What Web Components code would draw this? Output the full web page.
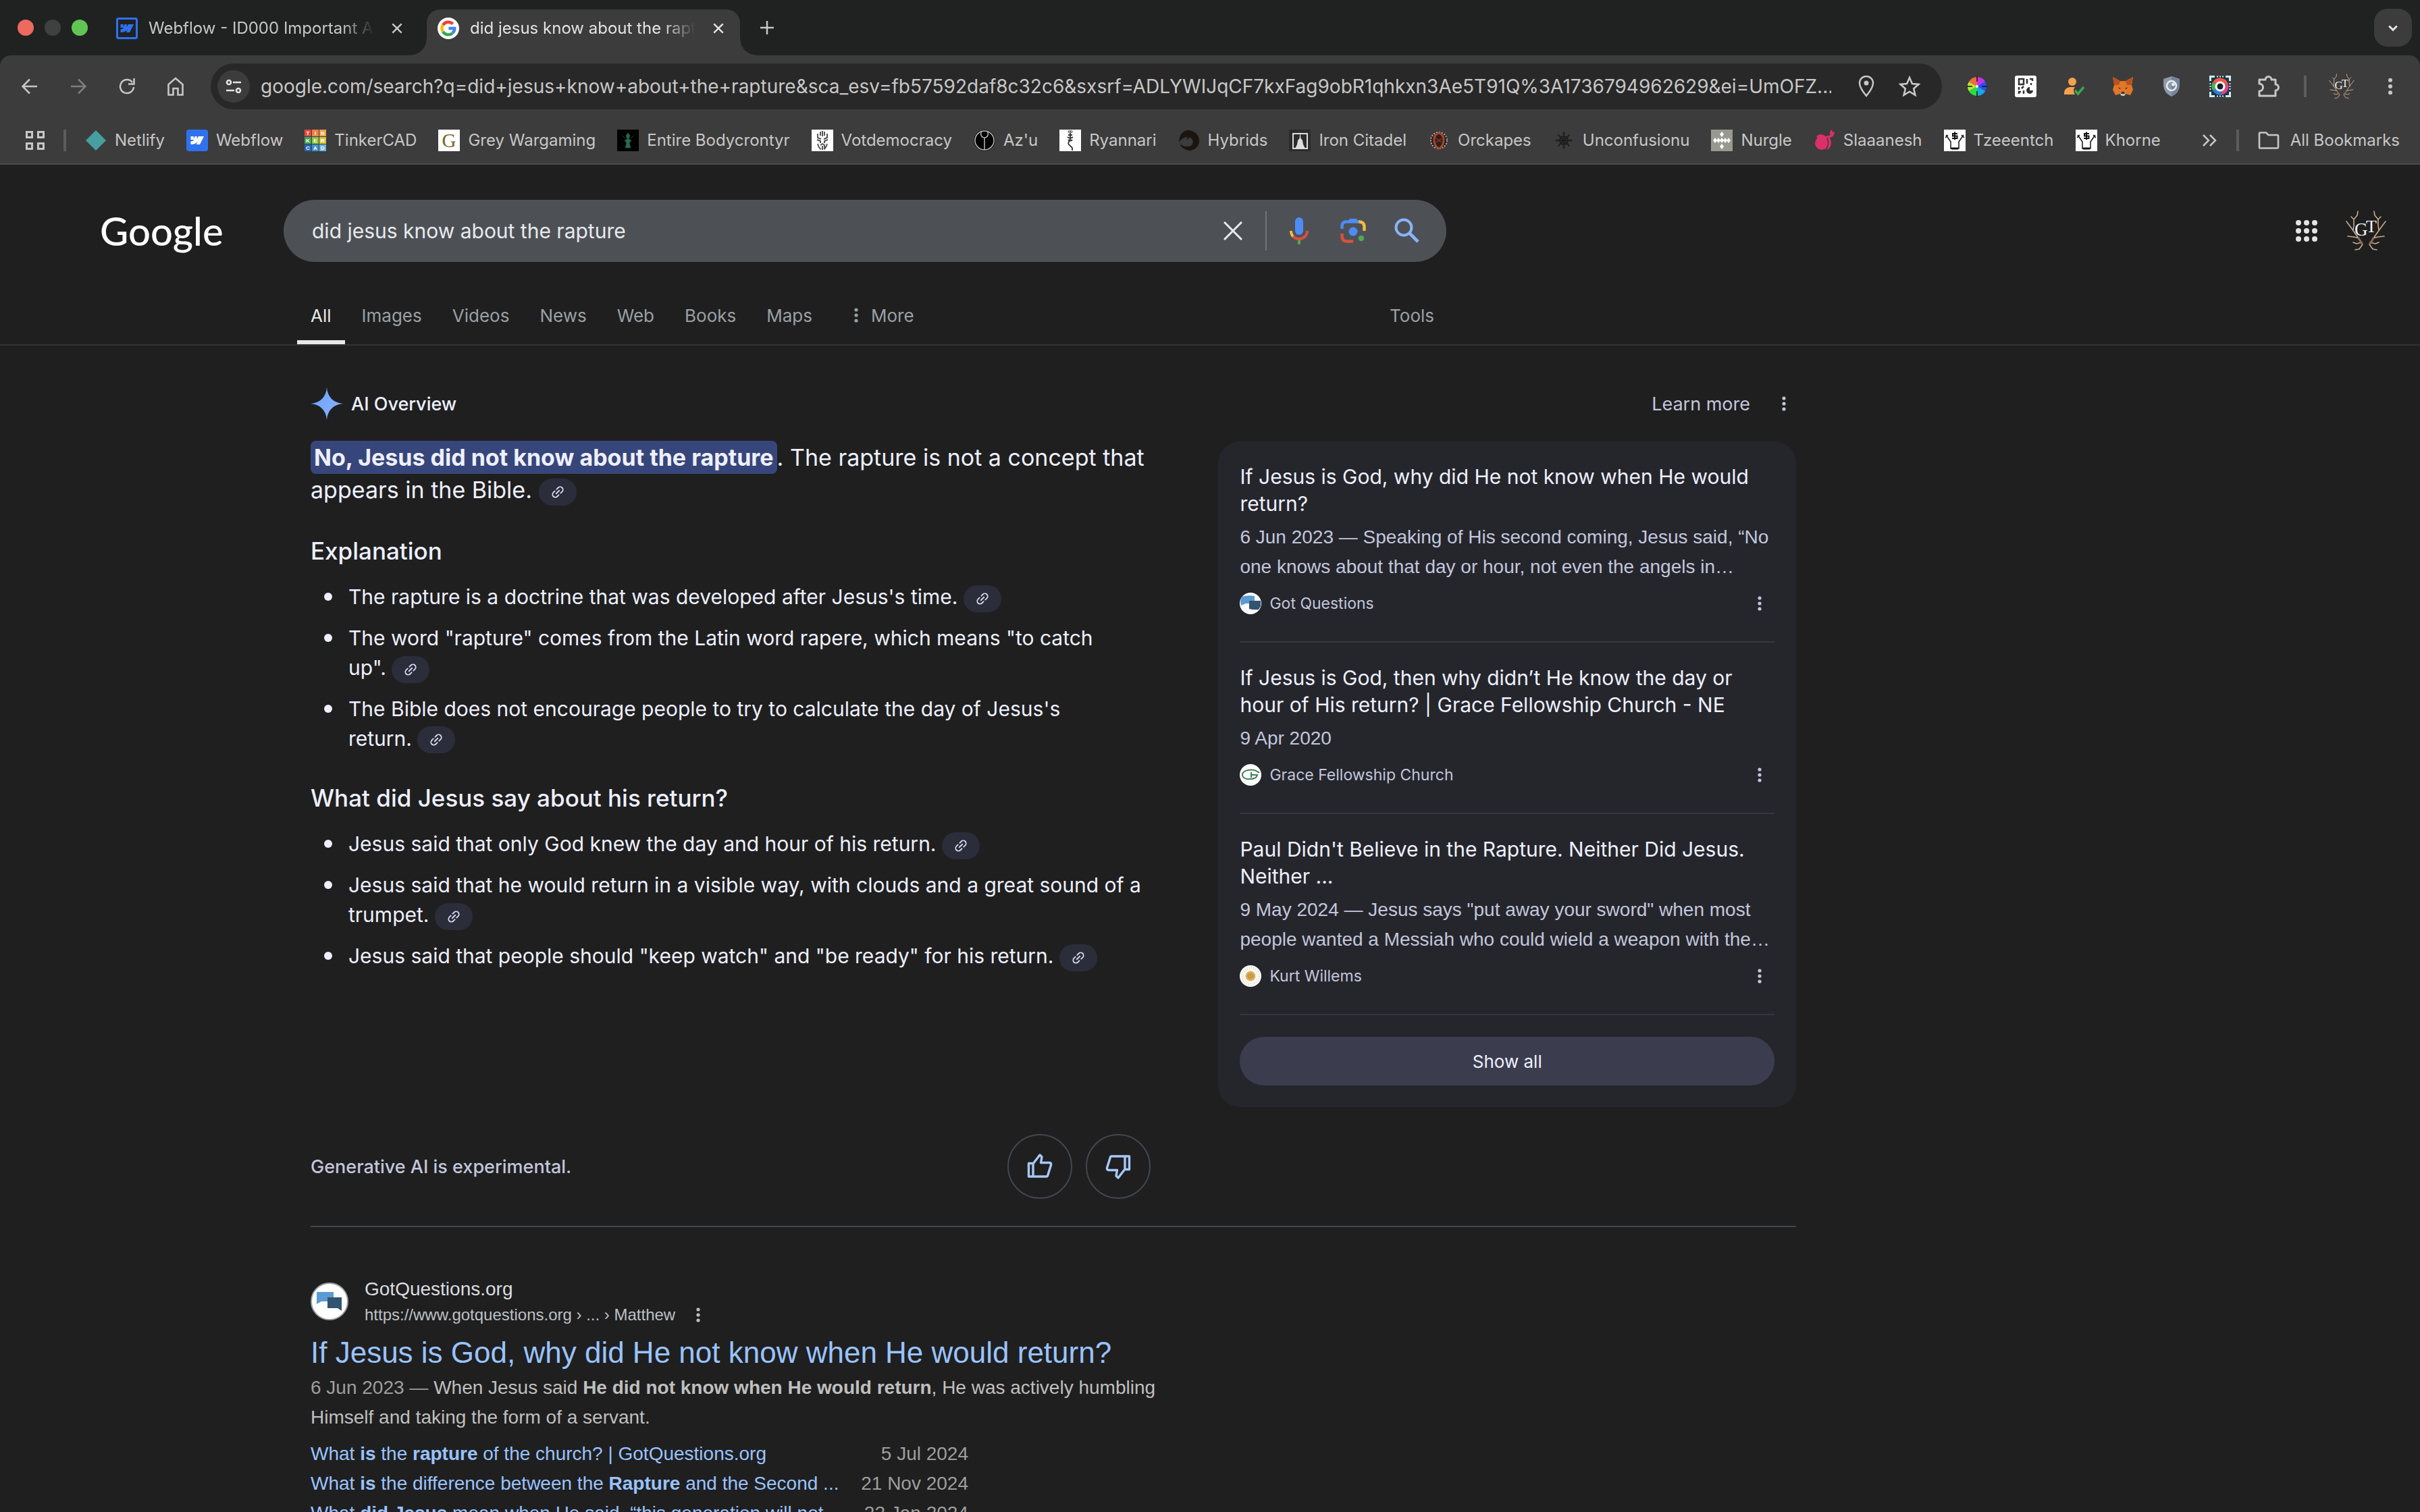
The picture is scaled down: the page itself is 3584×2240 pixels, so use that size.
<!DOCTYPE html>
<html lang="en">
<head>
<meta charset="utf-8">
<title>did jesus know about the rapture - Google Search</title>
<style>
  html {
    background: #1f1f1f;
    color-scheme: dark;
  }

  body {
    margin: 0;
    min-height: 100vh;
    overflow: hidden;
    --ui: Inter, "Liberation Sans", sans-serif;
    --arial: "Liberation Sans", Arial, sans-serif;
    font-family: var(--ui);
    color: #eef0ff;
  }
</style>
</head>
<body>

<browser-window>
  <tab-strip slot="tabs">
    <browser-tab icon="webflow-line">Webflow - ID000 Important Assets</browser-tab>
    <browser-tab icon="google" active>did jesus know about the rapture - Google</browser-tab>
  </tab-strip>
  <address-bar slot="toolbar"></address-bar>
  <bookmark-bar slot="bookmarks">
    <bookmark-link icon="netlify">Netlify</bookmark-link>
    <bookmark-link icon="webflow">Webflow</bookmark-link>
    <bookmark-link icon="tinkercad">TinkerCAD</bookmark-link>
    <bookmark-link icon="grey">Grey Wargaming</bookmark-link>
    <bookmark-link icon="entire">Entire Bodycrontyr</bookmark-link>
    <bookmark-link icon="vote">Votdemocracy</bookmark-link>
    <bookmark-link icon="azu">Az'u</bookmark-link>
    <bookmark-link icon="ryannari">Ryannari</bookmark-link>
    <bookmark-link icon="hybrids">Hybrids</bookmark-link>
    <bookmark-link icon="citadel">Iron Citadel</bookmark-link>
    <bookmark-link icon="orckapes">Orckapes</bookmark-link>
    <bookmark-link icon="chaos">Unconfusionu</bookmark-link>
    <bookmark-link icon="nurgle">Nurgle</bookmark-link>
    <bookmark-link icon="slaanesh">Slaaanesh</bookmark-link>
    <bookmark-link icon="tzeentch">Tzeeentch</bookmark-link>
    <bookmark-link icon="tzeentch">Khorne</bookmark-link>
  </bookmark-bar>

  <search-header></search-header>
  <search-nav></search-nav>

  <results-column>
    <ai-overview>
      <overview-text slot="text"></overview-text>
      <source-card slot="sources">
        <source-item icon="gotq" source="Got Questions">
          <span slot="title">If Jesus is God, why did He not know when He would return?</span>
          6 Jun 2023 — Speaking of His second coming, Jesus said, “No one knows about that day or hour, not even the angels in…
        </source-item>
        <source-item icon="grace" source="Grace Fellowship Church">
          <span slot="title">If Jesus is God, then why didn’t He know the day or hour of His return? | Grace Fellowship Church - NE</span>
          9 Apr 2020
        </source-item>
        <source-item icon="kurt" source="Kurt Willems">
          <span slot="title">Paul Didn't Believe in the Rapture. Neither Did Jesus. Neither ...</span>
          9 May 2024 — Jesus says "put away your sword" when most people wanted a Messiah who could wield a weapon with the…
        </source-item>
      </source-card>
    </ai-overview>

    <search-result>
      <span slot="title">If Jesus is God, why did He not know when He would return?</span>
      <span slot="date">6 Jun 2023 — </span>
      When Jesus said <b>He did not know when He would return</b>, He was actively humbling Himself and taking the form of a servant.
      <site-link slot="links" date="5 Jul 2024">What <b>is</b> the <b>rapture</b> of the church? | GotQuestions.org</site-link>
      <site-link slot="links" date="21 Nov 2024">What <b>is</b> the difference between the <b>Rapture</b> and the Second ...</site-link>
      <site-link slot="links" date="22 Jan 2024">What <b>did Jesus</b> mean when He said, “this generation will not ...</site-link>
    </search-result>
  </results-column>
</browser-window>

<script>
  const antlers = `
    <g fill="none" stroke="#c9ab8d" stroke-width="1.6" stroke-linecap="round" stroke-linejoin="round">
      <path d="M27 52 L19 40 L9 26 L3 18 M13 31 L14 24 L14 15 L19 9 L20 3 M14 15 L10 11 M22 43 L14 41 L5 40 M26 49 L18 51 L13 49 M27 52 L22 59 L16 60"/>
      <path d="M37 52 L45 40 L55 26 L61 18 M51 31 L50 24 L50 15 L45 9 L44 3 M50 15 L54 11 M42 43 L50 41 L59 40 M38 49 L46 51 L51 49 M37 52 L42 59 L48 60"/>
    </g>
    <g fill="none" stroke="#8a6a52" stroke-width="3" stroke-linecap="round"><path d="M26 51 L21 43 M38 51 L43 43"/></g>
    <text x="15" y="39" font-family="Liberation Serif" font-size="27" fill="#f4f4f4">G</text>
    <text x="32" y="34" font-family="Liberation Serif" font-size="26" fill="#f4f4f4">T</text>`;

  const robed = `
    <rect width="32" height="32" fill="#fff"/>
    <path d="M3 8 L10 18 V28 H22 V18 L29 8 M2 12 L6 8 M30 12 L26 8" fill="none" stroke="#111" stroke-width="1.500"/>
    <path d="M11 28 h10" stroke="#111" stroke-width="3"/>
    <path d="M20 6 H13 V9.500 H19.500 V13 H12 M16 3.500 V15" fill="none" stroke="#111" stroke-width="2"/>`;

  const stroke = (body, width = 2) => `<g fill="none" stroke="currentColor" stroke-width="${width}">${body}</g>`;

  // name: [viewBox size, markup]
  const icons = {
    'google': [32, `<circle cx="16" cy="16" r="16" fill="#fff"/>
      <g fill="none" stroke-width="4.4">
        <path d="M22.7 9.6 A9.4 9.4 0 0 0 8 11" stroke="#ea4335"/>
        <path d="M8 11 A9.4 9.4 0 0 0 8 21" stroke="#fbbc05"/>
        <path d="M8 21 A9.4 9.4 0 0 0 22 23.2" stroke="#34a853"/>
        <path d="M22 23.2 A9.4 9.4 0 0 0 25.3 16 H16.4" stroke="#4285f4"/>
      </g>`],
    'webflow-line': [32, `<rect x="1.5" y="1.5" width="29" height="29" rx="2" fill="none" stroke="#2f72f0" stroke-width="3"/>
      <path d="M26 10 L20 22 h-5.4 l2.3-4.6 Q13 22 6.500 22 V17.600 Q10 17.300 11.500 15 H6.500 V10 h4.300 v4 l1.700-4 h3.300 v4 l2-4 z" fill="#2f72f0"/>`],
    'webflow': [32, `<rect width="32" height="32" rx="4" fill="#2f72f0"/>
      <path d="M26 10 L20 22 h-5.4 l2.3-4.6 Q13 22 6.500 22 V17.600 Q10 17.300 11.500 15 H6.500 V10 h4.300 v4 l1.700-4 h3.300 v4 l2-4 z" fill="#fff"/>`],
    'close': [24, stroke('<path d="M4 4 L20 20 M20 4 L4 20"/>', 3)],
    'close-thin': [28, stroke('<path d="M1 1 L27 27 M27 1 L1 27"/>', 3)],
    'plus': [24, stroke('<path d="M12 2 V22 M2 12 H22"/>', 2.500)],
    'chevron': [24, stroke('<path d="M5 9 L12 16 L19 9"/>', 3.500)],
    'back': [24, stroke('<path d="M23 12 H2 M12 1.500 L1.500 12 L12 22.500"/>', 2.500)],
    'forward': [24, stroke('<path d="M1 12 H22 M12 1.500 L22.500 12 L12 22.500"/>', 2.500)],
    'reload': [24, stroke('<path d="M20 6 A10 10 0 1 0 22 13 M22.500 0 V8.500 H14"/>', 2.500)],
    'home': [28, stroke('<path d="M3.500 26.500 V11 L14 2 L24.500 11 V26.500 H17.500 V17 H10.500 V26.500 Z"/>', 2.600)],
    'tune': [24, stroke('<circle cx="5" cy="6" r="3"/><path d="M11 6 H23 M1 18 H13"/><circle cx="19" cy="18" r="3"/>', 2.600)],
    'pin': [32, stroke('<path d="M16 30 Q6 18 6 11 A10 10 0 0 1 26 11 Q26 18 16 30 Z"/>', 2.500) + '<circle cx="16" cy="11" r="3.500" fill="currentColor"/>'],
    'star': [32, stroke('<path d="M16 3 L19.900 12 L29.500 12.900 L22.200 19.300 L24.400 28.800 L16 23.700 L7.600 28.800 L9.800 19.300 L2.500 12.900 L12.100 12 Z"/>', 2.600)],
    'wheel': [32, `<g stroke="none">
        <path d="M16 16 V2 A14 14 0 0 1 28.100 9 Z" fill="#c435f0"/><path d="M16 16 L28.100 9 A14 14 0 0 1 28.100 23 Z" fill="#2b50f5"/>
        <path d="M16 16 L28.100 23 A14 14 0 0 1 16 30 Z" fill="#14a9e8"/><path d="M16 16 V30 A14 14 0 0 1 3.900 23 Z" fill="#2cdb3c"/>
        <path d="M16 16 L3.900 23 A14 14 0 0 1 3.900 9 Z" fill="#b5e836"/><path d="M16 16 L3.900 9 A14 14 0 0 1 16 2 Z" fill="#f5683b"/>
      </g><path d="M16 1 V9 M16 23 V31 M1 16 H9 M23 16 H31" stroke="#111" stroke-width="1.500"/><circle cx="16" cy="16" r="2" fill="#fff"/>`],
    'qr': [32, `<rect width="32" height="32" rx="3" fill="#fff"/><g fill="none" stroke="#333" stroke-width="2.500"><rect x="6" y="5" width="7" height="8"/><path d="M18 5 V12 M22 5 H26 V8 M24 11 V14 M6 17 V21 M10 19 L13 16 M6 27 V24 H9 M13 22 V27"/></g><path d="M22 17 V22 H27 A5 5 0 1 1 22 17 Z" fill="#333"/>`],
    'person': [32, `<circle cx="13" cy="9" r="6" fill="#f6a04d"/><path d="M1 28 V25 Q2 18 9 17 H17 Q13 22 17 28 Z" fill="#f6a04d"/><path d="M17 22 L21.500 27 L30 17" fill="none" stroke="#39a852" stroke-width="3.500"/>`],
    'fox': [32, `<path d="M1 2 L12 8 H20 L31 2 L29 14 L31 21 L27 29 L20 27 L18 30 H14 L12 27 L5 29 L1 21 L3 14 Z" fill="#e17726"/>
      <path d="M1 2 L12 8 L10 14 L3 14 Z M31 2 L20 8 L22 14 L29 14 Z" fill="#b8531d"/><path d="M12 27 L14 24 H18 L20 27 L18 30 H14 Z" fill="#d5bfb2"/><path d="M14 24 h4 l1 3 h-6 z M9 17 l4 2 -2 1 z M23 17 l-4 2 2 1 z" fill="#233447"/>`],
    'shield': [32, `<path d="M16 1 L28 5 V15 Q27 26 16 31 Q5 26 4 15 V5 Z" fill="#8d99ab"/><path d="M16 1 L28 5 V15 Q27 26 16 31 Z" fill="#76839a"/><circle cx="16" cy="15" r="7" fill="none" stroke="#e9edf2" stroke-width="2.500"/><circle cx="18.500" cy="13" r="2.500" fill="#e9edf2"/>`],
    'lenscap': [32, `<rect x="1.500" y="1.500" width="29" height="29" fill="#20343f"/><path d="M1.500 8 V1.500 H8 M24 1.500 H30.500 V8 M30.500 24 V30.500 H24 M8 30.500 H1.500 V24" fill="none" stroke="#c9f0fb" stroke-width="3"/><path d="M11 1.500 H22 M11 30.500 H22 M1.500 11 V22 M30.500 11 V22" stroke="#c9f0fb" stroke-width="2" stroke-dasharray="2 2"/><path d="M16 16 L5 10 A12.500 12.500 0 0 1 28 13 Z" fill="#f0584b"/><path d="M16 16 L28 13 A12.500 12.500 0 0 1 18 28.500 Z" fill="#d8488a"/><path d="M16 16 L18 28.500 A12.500 12.500 0 0 1 5 22 Z" fill="#2f7fd8"/><path d="M16 16 L5 22 A12.500 12.500 0 0 1 5 10 Z" fill="#4cb14f"/><circle cx="16" cy="16" r="7.500" fill="#fff"/><circle cx="16" cy="16" r="4.500" fill="#14202c"/>`],
    'puzzle': [36, stroke('<path d="M4 8 H13 A4.500 4.500 0 0 1 22 8 H28 V15 A4.500 4.500 0 0 1 28 24 V32 H4 V25 A5.500 5.500 0 0 0 4 14 Z" stroke-linejoin="round"/>', 3)],
    'antlers': [64, antlers],
    'dots': [24, '<g fill="currentColor"><circle cx="12" cy="4" r="2.600"/><circle cx="12" cy="12" r="2.600"/><circle cx="12" cy="20" r="2.600"/></g>'],
    'apps': [32, '<g fill="currentColor">' + [4, 16, 28].map(y => [4, 16, 28].map(x => `<circle cx="${x}" cy="${y}" r="4"/>`).join('')).join('') + '</g>'],
    'grid': [28, stroke('<rect x="1.500" y="1.500" width="8" height="8"/><rect x="18.500" y="1.500" width="8" height="8"/><rect x="1.500" y="18.500" width="8" height="8"/><rect x="18.500" y="18.500" width="8" height="8"/>', 3)],
    'more-right': [24, stroke('<path d="M3 4 L11 12 L3 20 M13 4 L21 12 L13 20"/>', 2.500)],
    'folder': [32, stroke('<path d="M2 26 V6 Q2 4.500 3.500 4.500 H12 L15.500 8 H28.500 Q30 8 30 9.500 V26 Q30 27.500 28.500 27.500 H3.500 Q2 27.500 2 26 Z"/>', 2.600)],

    'netlify': [32, '<path d="M16 1 L31 16 L16 31 L1 16 Z" fill="#479f9f"/>'],
    'tinkercad': [32, ['#e5493a', '#f0824a', '#f0a04a', '#44a859', '#8fc63f', '#dcc63f', '#2468b2', '#3f8fcc', '#6fb3dc'].map((c, i) => {
        const x = (i % 3) * 11, y = Math.floor(i / 3) * 11;
        return `<rect x="${x}" y="${y}" width="10" height="10" fill="${c}"/><text x="${x + 5}" y="${y + 8}" text-anchor="middle" font-family="Liberation Sans" font-weight="700" font-size="8" fill="#fff">${'TINKERCAD'[i]}</text>`;
      }).join('')],
    'grey': [32, '<rect width="32" height="32" fill="#fff"/><text x="16" y="26" text-anchor="middle" font-family="Liberation Serif" font-size="29" fill="#7b6226">G</text>'],
    'entire': [32, '<rect width="32" height="32" fill="#000"/><path d="M16 5 L19 9 L17 14 L21 16 L18 20 L20 27 H12 L14 20 L11 16 L15 14 L13 9 Z M8 9 L12 13 M24 9 L20 13" fill="#2a6b50" stroke="#1d4c3a"/>'],
    'vote': [32, '<rect width="32" height="32" fill="#fff"/><g fill="none" stroke="#555" stroke-width="2"><path d="M13 3 V9 M16 2 V10 M19 3 V9 M9 6 V12 L14 14 M23 6 V12 L18 14 M8 15 L13 17 V20 M24 15 L19 17 V20 M9 21 Q11 28 14 29 M23 21 Q21 28 18 29 M13 23 L16 21 L19 23 V28 M16 24 V30"/></g>'],
    'azu': [32, '<circle cx="16" cy="16" r="15.500" fill="#000"/><circle cx="16" cy="16" r="14" fill="none" stroke="#bbb" stroke-width="1.500"/><path d="M16 12 V30 M13 2 A5.500 5.500 0 0 0 16 12 A5.500 5.500 0 0 0 19 2" fill="none" stroke="#bbb" stroke-width="1.500"/>'],
    'ryannari': [32, '<rect width="32" height="32" fill="#fff"/><circle cx="14.500" cy="3" r="1.500" fill="none" stroke="#333"/><circle cx="17.500" cy="3" r="1.500" fill="none" stroke="#333"/><path d="M16 5 V14 L14 18 Q12 21 15 23 L19 27 V31" fill="none" stroke="#333" stroke-width="1.800"/><path d="M12 11 Q16 14 20 11 M13 15 Q16 18 19 15 M13 8 H19" fill="none" stroke="#333" stroke-width="2"/>'],
    'hybrids': [32, '<path d="M15 1 Q30 3 31 17 Q29 30 16 31 Q5 28 3 22 Q14 29 21 22 Q24 15 17 11 L13 15 L14 10 L6 13 L1 18 L3 9 Q8 1 15 1 Z" fill="#1b1512" stroke="#1b1512" stroke-dasharray="2 2"/>'],
    'citadel': [32, '<rect width="32" height="32" fill="#2b2b2b"/><rect x="6" y="6" width="21" height="22" fill="none" stroke="#ddd" stroke-width="2"/><path d="M16.500 3 L17.500 13 L20 16 L21 22 L24 28 H9 L12 22 L13 16 L15.500 13 Z" fill="#ddd"/>'],
    'orckapes': [32, '<circle cx="16" cy="16" r="12" fill="#24201f" stroke="#b8b2ae" stroke-width="2" stroke-dasharray="2 2"/><path d="M16 5 Q8 8 9 17 Q10 25 16 28 Q22 25 23 17 Q24 8 16 5" fill="none" stroke="#a8452c" stroke-width="3"/><path d="M12 13 L20 19 M20 13 L12 19" stroke="#7b3020" stroke-width="2"/>'],
    'chaos': [32, '<g stroke="#1c1e20" fill="none" stroke-width="2"><circle cx="16" cy="16" r="6"/><path d="M16 4 V28 M4 16 H28 M7.500 7.500 L24.500 24.500 M24.500 7.500 L7.500 24.500"/></g><path d="M16 3 l2 3 h-4 z M16 29 l2-3 h-4 z M3 16 l3 2 v-4 z M29 16 l-3 2 v-4 z" fill="#1c1e20"/>'],
    'nurgle': [32, '<rect width="32" height="32" fill="#98998f"/><g fill="#fff">' + [[16, 7], [16, 16], [16, 25], [6, 16], [11, 16], [21, 16], [26, 16]].map(([x, y]) => `<path d="M${x} ${y - 4} l3 4 -3 4 -3 -4 z"/>`).join('') + '</g>'],
    'slaanesh': [32, '<ellipse cx="12" cy="20" rx="10" ry="10" fill="#db3069"/><path d="M4 10 Q10 4 18 10 L25 8 Q22 4 27 0 L28 4 L31 3 Q31 10 24 12 L26 18 Q26 28 19 30 Z" fill="#db3069"/><path d="M20 12 Q24 21 18 30" fill="none" stroke="#3c3c3c" stroke-width="1.500"/>'],
    'tzeentch': [32, robed],

    'mic': [40, `<rect x="14" y="0" width="12" height="26" rx="6" fill="#4f8bf5"/><path d="M18 32 h4 v8 h-4 z" fill="#53a653"/>
      <path d="M8 20 Q8 26 12 29" fill="none" stroke="#f2bb42" stroke-width="4"/><path d="M11 28 Q15 32 20 32 A12 12 0 0 0 32 20" fill="none" stroke="#d9503f" stroke-width="4"/>`],
    'lens': [40, `<g fill="none" stroke-width="4.500">
        <path d="M3.500 17 V13 Q3.500 6.500 10 6.500 H28" stroke="#4f8bf5"/><path d="M28 6.500 Q36.500 6.500 36.500 14 V20" stroke="#f2bb42"/>
        <path d="M3.500 24 V28 Q3.500 35.500 11 35.500 H20" stroke="#d9503f"/></g>
      <path d="M12 6 L15 2 H25 L29 8 H12 Z" fill="#4f8bf5"/><circle cx="20" cy="21" r="6.500" fill="#4f8bf5"/><circle cx="32" cy="31" r="4.200" fill="#53a653"/>`],
    'magnify': [40, '<g fill="none" stroke="#8ab4f8" stroke-width="4"><circle cx="15" cy="15" r="11.500"/><path d="M23 23 L36 36" stroke-width="4.800"/></g>'],
    'spark': [48, `<defs><linearGradient id="g" x1="0" y1="0" x2="1" y2="1"><stop offset="0" stop-color="#6c9ffb"/><stop offset="1" stop-color="#8ab4ff"/></linearGradient></defs>
      <path d="M24 0 C25 14 34 23 48 24 C34 25 25 34 24 48 C23 34 14 25 0 24 C14 23 23 14 24 0 Z" fill="url(#g)"/>`],
    'link': [24, '<g fill="none" stroke="currentColor" stroke-width="2" stroke-linecap="round" transform="rotate(-45 12 12)"><path d="M10 7.500 H6.500 a4.500 4.500 0 0 0 0 9 H10 M14 7.500 H17.500 a4.500 4.500 0 0 1 0 9 H14 M8.500 12 H15.500"/></g>'],
    'thumb-up': [40, stroke('<path d="M3.500 15.500 H10 V35 H3.500 Z M10 16 L20 3 L23 6 L21.500 14.500 H34.500 Q37 15 36.500 18 L31.500 34 Q31 35 30 35 H10" stroke-linejoin="round"/>', 3.400)],
    'gotq': [32, '<circle cx="16" cy="16" r="16" fill="#fff"/><path d="M3 6 Q12 3 22 5 V16 H9 L2 19 Q0 12 3 6 Z" fill="#5b9bd1"/><path d="M14 12 H31 V20 L28 25 Q20 26 14 24 Z" fill="#31546f"/>'],
    'gotq-large': [56, '<circle cx="28" cy="28" r="27" fill="#fff" stroke="#9aa0a6" stroke-width="2"/><path d="M9 14 H34 V28 H16 L9 32 Z" fill="#5b9bd1"/><path d="M25 22 H46 V42 L40 38 H25 Z" fill="#31546f"/>'],
    'grace': [32, '<circle cx="16" cy="16" r="16" fill="#fff"/><path d="M29 13 Q22 7 12 9 Q3 11 4 17 Q6 23 16 22 Q25 22 26 16 H18 M17 12 V20" fill="none" stroke="#3f7d56" stroke-width="2"/>'],
    'kurt': [32, '<circle cx="16" cy="16" r="16" fill="#fbfaf6"/><circle cx="16" cy="16" r="12" fill="none" stroke="#e6dfc8" stroke-dasharray="1 2" stroke-width="4"/><circle cx="16" cy="16" r="7.500" fill="#d9b566"/><circle cx="16" cy="16" r="5" fill="#c99d45"/>'],
  };

  class UiIcon extends HTMLElement {
    constructor() {
      super();
      this.attachShadow({ mode: 'open' });
    }

    connectedCallback() {
      const [box, body] = icons[this.getAttribute('name')];
      const size = this.getAttribute('size') || box;
      this.shadowRoot.innerHTML = `
        <style>
          :host { display: inline-flex; flex: none; }
          svg { display: block; }
        </style>
        <svg width="${size}" height="${size}" viewBox="0 0 ${box} ${box}" aria-hidden="true">${body}</svg>`;
    }
  }
  customElements.define('ui-icon', UiIcon);

  // Base for everything else: subclasses return their styles and markup from render().
  class Part extends HTMLElement {
    constructor() {
      super();
      this.attachShadow({ mode: 'open' });
    }

    connectedCallback() {
      this.shadowRoot.innerHTML = `
        <style>
          * { box-sizing: border-box; margin: 0; padding: 0; }
          button { display: inline-flex; align-items: center; justify-content: center; border: 0; background: none; color: inherit; font: inherit; cursor: pointer; }
          a { color: inherit; text-decoration: none; }
          input { border: 0; outline: 0; background: none; font: inherit; color: inherit; }
        </style>` + this.render();
    }
  }

  customElements.define('browser-window', class extends Part {
    render() {
      return `
        <style>
          :host { display: block; }
          .chrome { background: #202221; color: #c7c7c7; }
          .bars { background: #3c3c3c; border-radius: 16px 16px 0 0; border-bottom: 2px solid #4a4a4a; }
        </style>
        <div class="chrome">
          <slot name="tabs"></slot>
          <div class="bars">
            <slot name="toolbar"></slot>
            <slot name="bookmarks"></slot>
          </div>
        </div>
        <slot></slot>`;
    }
  });

  customElements.define('tab-strip', class extends Part {
    render() {
      return `
        <style>
          :host { display: flex; align-items: center; height: 82px; padding: 0 12px 0 26px; }
          .lights { display: flex; gap: 16px; margin-right: 26px; }
          .lights i { width: 24px; height: 24px; border-radius: 50%; background: #3f4140; }
          .lights i:first-child { background: #ed6a5e; }
          .lights i:last-child { background: #61c554; }
          .tabs { display: flex; gap: 12px; align-self: stretch; padding-top: 14px; }
          .new { width: 56px; height: 56px; margin-left: 12px; }
          .search { width: 56px; height: 56px; margin-left: auto; border-radius: 20px; background: #3c3c3c; color: #e3e3e3; }
        </style>
        <div class="lights"><i></i><i></i><i></i></div>
        <div class="tabs"><slot></slot></div>
        <button class="new" aria-label="New tab"><ui-icon name="plus"></ui-icon></button>
        <button class="search" aria-label="Search tabs"><ui-icon name="chevron" size="20"></ui-icon></button>`;
    }
  });

  customElements.define('browser-tab', class extends Part {
    render() {
      return `
        <style>
          :host { box-sizing: border-box; display: flex; align-items: center; gap: 16px; width: 464px; padding: 0 22px 12px 16px; font-size: 24px; line-height: 32px; position: relative; }
          :host([active]) { background: #3c3c3c; border-radius: 20px 20px 0 0; color: #e3e3e3; }
          :host([active])::before, :host([active])::after {
            content: ""; position: absolute; bottom: 0; width: 24px; height: 24px;
            background: radial-gradient(circle at 0 0, transparent 23px, #3c3c3c 24px);
          }
          :host([active])::before { right: 100%; }
          :host([active])::after { left: 100%; transform: scaleX(-1); }
          .title { flex: 1; min-width: 0; overflow: hidden; white-space: nowrap; margin-right: 8px; mask-image: linear-gradient(to left, transparent, #000 48px); }
        </style>
        <ui-icon name="${this.getAttribute('icon')}"></ui-icon>
        <span class="title"><slot></slot></span>
        <button aria-label="Close tab"><ui-icon name="close" size="20"></ui-icon></button>`;
    }
  });

  customElements.define('address-bar', class extends Part {
    render() {
      const extensions = ['wheel', 'qr', 'person', 'fox', 'shield', 'lenscap'];
      return `
        <style>
          :host { display: flex; align-items: center; height: 92px; padding: 0 8px; }
          button { width: 72px; height: 64px; }
          .off { color: #7d7d7d; }
          .box { flex: 1; display: flex; align-items: center; height: 68px; margin: 0 16px; padding: 0 16px 0 10px; border-radius: 34px; background: #282828; font-size: 28px; }
          .box button { width: 64px; }
          .box .site { width: 48px; height: 48px; border-radius: 50%; background: #3c3c3c; color: #e3e3e3; }
          input { flex: 1; min-width: 0; height: 48px; margin: 0 20px 0 16px; }
          .rule { width: 4px; height: 32px; margin: 0 16px; background: #5c5c5c; }
        </style>
        <button aria-label="Back"><ui-icon name="back"></ui-icon></button>
        <button class="off" aria-label="Forward"><ui-icon name="forward"></ui-icon></button>
        <button aria-label="Reload"><ui-icon name="reload"></ui-icon></button>
        <button aria-label="Home"><ui-icon name="home"></ui-icon></button>
        <div class="box">
          <button class="site" aria-label="View site information"><ui-icon name="tune"></ui-icon></button>
          <input aria-label="Address and search bar" value="google.com/search?q=did+jesus+know+about+the+rapture&amp;sca_esv=fb57592daf8c32c6&amp;sxsrf=ADLYWIJqCF7kxFag9obR1qhkxn3Ae5T91Q%3A1736794962629&amp;ei=UmOFZ...">
          <button aria-label="Location"><ui-icon name="pin"></ui-icon></button>
          <button aria-label="Bookmark this tab"><ui-icon name="star"></ui-icon></button>
        </div>
        ${extensions.map(name => `<button aria-label="${name}"><ui-icon name="${name}"></ui-icon></button>`).join('')}
        <button aria-label="Extensions"><ui-icon name="puzzle"></ui-icon></button>
        <span class="rule"></span>
        <button aria-label="Profile"><ui-icon name="antlers" size="40"></ui-icon></button>
        <button aria-label="Menu"><ui-icon name="dots" size="28"></ui-icon></button>`;
    }
  });

  customElements.define('bookmark-bar', class extends Part {
    render() {
      return `
        <style>
          :host { display: flex; align-items: center; height: 68px; padding: 0 30px 0 38px; font-size: 24px; line-height: 32px; white-space: nowrap; }
          .rule { width: 4px; height: 32px; margin: 0 28px; background: #5c5c5c; }
          .list { display: flex; gap: 32px; }
          .over { margin-left: auto; }
          .all { display: flex; align-items: center; gap: 16px; }
        </style>
        <button aria-label="Tab groups"><ui-icon name="grid"></ui-icon></button>
        <span class="rule"></span>
        <div class="list"><slot></slot></div>
        <button class="over" aria-label="More bookmarks"><ui-icon name="more-right"></ui-icon></button>
        <span class="rule"></span>
        <button class="all"><ui-icon name="folder"></ui-icon>All Bookmarks</button>`;
    }
  });

  customElements.define('bookmark-link', class extends Part {
    render() {
      return `
        <style>
          :host { display: block; }
          a { display: flex; align-items: center; gap: 12px; }
        </style>
        <a href="#"><ui-icon name="${this.getAttribute('icon')}"></ui-icon><slot></slot></a>`;
    }
  });

  customElements.define('search-header', class extends Part {
    render() {
      return `
        <style>
          :host { display: flex; align-items: center; padding: 52px 44px 0 148px; }
          .logo { width: 272px; font: 500 58px/92px Lato, sans-serif; color: #fff; }
          form { display: flex; align-items: center; flex: 0 1 1722px; height: 92px; padding: 0 18px 0 42px; border-radius: 46px; background: #4d5156; font-size: 30px; color: #e8eaed; }
          input { flex: 1; min-width: 0; height: 64px; }
          button { width: 80px; height: 64px; }
          .clear { width: 96px; }
          .rule { width: 2px; height: 58px; margin-right: 8px; background: #72767b; }
          .apps { margin-left: auto; margin-right: 12px; color: #e3e3e3; }
          .me { width: 72px; }
        </style>
        <a class="logo" href="#">Google</a>
        <form>
          <input aria-label="Search" value="did jesus know about the rapture">
          <button class="clear" type="reset" aria-label="Clear"><ui-icon name="close-thin"></ui-icon></button>
          <span class="rule"></span>
          <button type="button" aria-label="Search by voice"><ui-icon name="mic"></ui-icon></button>
          <button type="button" aria-label="Search by image"><ui-icon name="lens"></ui-icon></button>
          <button aria-label="Search"><ui-icon name="magnify"></ui-icon></button>
        </form>
        <button class="apps" aria-label="Google apps"><ui-icon name="apps"></ui-icon></button>
        <button class="me" aria-label="Account"><ui-icon name="antlers"></ui-icon></button>`;
    }
  });

  customElements.define('search-nav', class extends Part {
    render() {
      const tabs = ['All', 'Images', 'Videos', 'News', 'Web', 'Books', 'Maps'];
      return `
        <style>
          :host { display: block; margin-top: 36px; padding-left: 440px; border-bottom: 2px solid #333; font-size: 26px; color: #9aa0a6; }
          nav { display: flex; gap: 5px; max-width: 1704px; }
          a, button { display: flex; align-items: center; height: 86px; padding: 0 20px; border-bottom: 6px solid transparent; border-top: 6px solid transparent; }
          .on { color: #e8e8e8; border-bottom-color: #e8e8e8; }
          .more { gap: 10px; padding-left: 28px; }
          .tools { margin-left: auto; }
        </style>
        <nav>
          ${tabs.map((t, i) => `<a href="#" class="${i ? '' : 'on'}">${t}</a>`).join('')}
          <button class="more"><ui-icon name="dots"></ui-icon>More</button>
          <button class="tools">Tools</button>
        </nav>`;
    }
  });

  customElements.define('results-column', class extends Part {
    render() {
      return `
        <style>
          :host { display: block; max-width: 2200px; margin-left: 460px; padding-top: 62px; }
        </style>
        <slot></slot>`;
    }
  });

  customElements.define('link-chip', class extends Part {
    render() {
      return `
        <style>
          :host { display: inline-flex; height: 40px; vertical-align: middle; }
          button { width: 56px; height: 40px; border-radius: 20px; background: #2c2d3b; color: #d8daf0; }
        </style>
        <button aria-label="View related links"><ui-icon name="link" size="22"></ui-icon></button>`;
    }
  });

  customElements.define('ai-overview', class extends Part {
    render() {
      return `
        <style>
          :host { display: block; border-bottom: 2px solid #43464f; padding-bottom: 40px; }
          header { display: flex; align-items: center; height: 48px; margin-bottom: 32px; }
          h2 { margin-left: 12px; font-size: 27px; font-weight: 500; }
          .learn { margin-left: auto; margin-right: 38px; font-size: 27px; color: #c3c6dc; }
          .menu { width: 24px; margin-right: 6px; color: #c3c6dc; }
          .body { display: grid; grid-template-columns: 16fr 11fr; column-gap: 100px; row-gap: 40px; }
          .feedback { display: flex; align-items: center; gap: 20px; font-size: 27px; font-weight: 500; color: #c3c6dc; }
          .feedback p { flex: 1; }
          .feedback button { width: 96px; height: 96px; border: 2px solid #444653; border-radius: 50%; color: #a8c7fa; }
          .down ui-icon { transform: rotate(180deg); }
        </style>
        <header>
          <ui-icon name="spark"></ui-icon>
          <h2>AI Overview</h2>
          <a class="learn" href="#">Learn more</a>
          <button class="menu" aria-label="About this result"><ui-icon name="dots"></ui-icon></button>
        </header>
        <div class="body">
          <slot name="text"></slot>
          <slot name="sources"></slot>
          <div class="feedback">
            <p>Generative AI is experimental.</p>
            <button aria-label="Good response"><ui-icon name="thumb-up"></ui-icon></button>
            <button class="down" aria-label="Bad response"><ui-icon name="thumb-up"></ui-icon></button>
          </div>
        </div>`;
    }
  });

  // .end keeps the last word of a sentence on the same line as its chip
  customElements.define('overview-text', class extends Part {
    render() {
      return `
        <style>
          :host { display: block; font-size: 30px; line-height: 44px; }
          .lead { font-size: 34px; line-height: 48px; }
          mark { padding: 4px 5px; border-radius: 8px; background: #37467a; color: inherit; font-weight: 700; }
          h3 { margin: 42px 0 22px; font-size: 35px; line-height: 48px; font-weight: 500; }
          ul { padding-left: 56px; list-style: none; }
          li + li { margin-top: 16px; }
          li::before { content: ""; display: inline-block; width: 12px; height: 12px; margin: 0 24px 0 -36px; border-radius: 50%; background: currentColor; vertical-align: 5px; }
          .end { white-space: nowrap; }
        </style>
        <p class="lead"><mark>No, Jesus did not know about the rapture</mark>. The rapture is not a concept that appears in the <span class="end">Bible. <link-chip></link-chip></span></p>
        <h3>Explanation</h3>
        <ul>
          <li>The rapture is a doctrine that was developed after Jesus's <span class="end">time. <link-chip></link-chip></span></li>
          <li>The word "rapture" comes from the Latin word rapere, which means "to catch <span class="end">up". <link-chip></link-chip></span></li>
          <li>The Bible does not encourage people to try to calculate the day of Jesus's <span class="end">return. <link-chip></link-chip></span></li>
        </ul>
        <h3>What did Jesus say about his return?</h3>
        <ul>
          <li>Jesus said that only God knew the day and hour of his <span class="end">return. <link-chip></link-chip></span></li>
          <li>Jesus said that he would return in a visible way, with clouds and a great sound of a <span class="end">trumpet. <link-chip></link-chip></span></li>
          <li>Jesus said that people should "keep watch" and "be ready" for his <span class="end">return. <link-chip></link-chip></span></li>
        </ul>`;
    }
  });

  customElements.define('source-card', class extends Part {
    render() {
      return `
        <style>
          :host { display: block; padding: 32px; border-radius: 32px; background: #25262c; }
          button { width: 100%; height: 72px; border-radius: 36px; background: #3b3d4f; font-size: 26px; }
        </style>
        <slot></slot>
        <button>Show all</button>`;
    }
  });

  customElements.define('source-item', class extends Part {
    render() {
      return `
        <style>
          :host { display: block; margin-bottom: 32px; padding-bottom: 40px; border-bottom: 2px solid #35363f; }
          h4 { font-size: 30px; line-height: 40px; font-weight: 400; }
          p { margin: 8px 0 16px; font: 28px/44px var(--arial); color: #c3c6dc; }
          footer { display: flex; align-items: center; height: 32px; gap: 12px; font-size: 23px; color: #c3c6dc; }
          button { width: 44px; height: 32px; margin-left: auto; }
        </style>
        <h4><a href="#"><slot name="title"></slot></a></h4>
        <p><slot></slot></p>
        <footer>
          <ui-icon name="${this.getAttribute('icon')}"></ui-icon>
          <span>${this.getAttribute('source')}</span>
          <button aria-label="About this source"><ui-icon name="dots"></ui-icon></button>
        </footer>`;
    }
  });

  customElements.define('search-result', class extends Part {
    render() {
      return `
        <style>
          :host { display: block; max-width: 1304px; padding-top: 72px; font: 28px/44px var(--arial); color: #bfbfbf; }
          header { display: flex; align-items: center; gap: 24px; height: 76px; }
          .site { color: #dadce0; line-height: 40px; }
          .url { display: flex; align-items: center; gap: 22px; font-size: 24px; line-height: 36px; color: #bdc1c6; }
          cite { font-style: normal; }
          h3 { margin-top: 8px; font-size: 44px; line-height: 60px; font-weight: 400; color: #99c3ff; }
          .date { color: #9e9e9e; }
          .links { margin-top: 10px; max-width: 974px; }
        </style>
        <header>
          <ui-icon name="gotq-large"></ui-icon>
          <div>
            <div class="site">GotQuestions.org</div>
            <div class="url"><cite>https://www.gotquestions.org › ... › Matthew</cite><button aria-label="About this result"><ui-icon name="dots"></ui-icon></button></div>
          </div>
        </header>
        <h3><a href="#"><slot name="title"></slot></a></h3>
        <p><span class="date"><slot name="date"></slot></span><slot></slot></p>
        <div class="links"><slot name="links"></slot></div>`;
    }
  });

  customElements.define('site-link', class extends Part {
    render() {
      return `
        <style>
          :host { display: flex; justify-content: space-between; }
          a { color: #99c3ff; }
          time { color: #9e9e9e; }
        </style>
        <a href="#"><slot></slot></a>
        <time>${this.getAttribute('date')}</time>`;
    }
  });
</script>
</body>
</html>
